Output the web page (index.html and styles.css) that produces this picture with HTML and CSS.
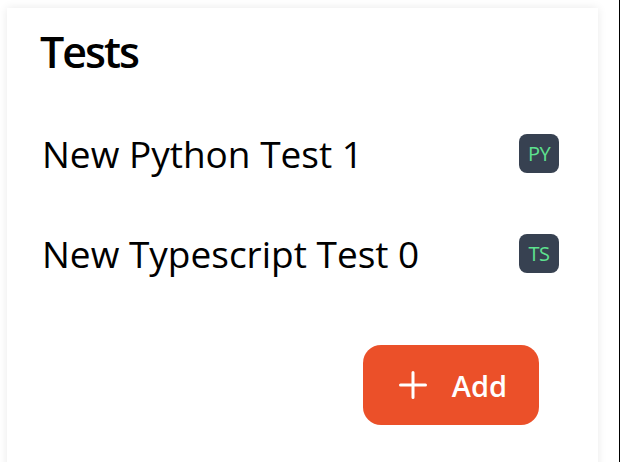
FILE: index.html
```html
<!DOCTYPE html>
<html>
<head>
<meta charset="utf-8">
<link rel="stylesheet" href="styles.css">
</head>
<body>
<div class="page">
  <section class="card">
    <h2 class="title">Tests</h2>
    <ul class="tests">
      <li class="test-row">
        <span class="test-name">New Python Test 1</span>
        <span class="badge">PY</span>
      </li>
      <li class="test-row">
        <span class="test-name">New Typescript Test 0</span>
        <span class="badge">TS</span>
      </li>
    </ul>
    <div class="actions">
      <button class="add-btn" type="button">
        <svg class="plus" width="28" height="28" viewBox="0 0 28 28" aria-hidden="true">
          <path d="M14 1.5V26.5M1.5 14H26.5" stroke="#fff" stroke-width="3" stroke-linecap="round" fill="none"/>
        </svg>
        <span>Add</span>
      </button>
    </div>
  </section>
</div>
</body>
</html>
```

FILE: styles.css
```css
html, body {
  margin: 0;
  padding: 0;
  background: #ffffff;
}

body {
  width: 620px;
  height: 462px;
  overflow: hidden;
  font-family: "Open Sans", "Noto Sans", sans-serif;
  color: #000;
}

.page {
  width: 619px;
  height: 462px;
  border-right: 1px solid #000;
  display: flex;
  align-items: flex-start;
}

.card {
  margin: 8px 0 0 7px;
  width: 591px;
  height: 470px;
  box-sizing: border-box;
  padding: 14px 39px 0 33px;
  background: #fff;
  box-shadow: 0 0 9px rgba(0, 0, 0, 0.09);
}

.title {
  margin: 0;
  font-size: 43px;
  font-weight: 600;
  line-height: 60px;
  letter-spacing: -2px;
}

.tests {
  list-style: none;
  margin: 0;
  padding: 0;
}

.test-row {
  display: flex;
  align-items: center;
  justify-content: space-between;
  height: 100px;
}

.tests .test-row:first-child {
  margin-top: 21px;
}

.test-name {
  font-size: 37px;
  padding-left: 2px;
}

.badge {
  width: 40px;
  height: 39px;
  border-radius: 8px;
  background: #374151;
  color: #5ee28f;
  font-size: 20px;
  display: flex;
  align-items: center;
  justify-content: center;
  letter-spacing: -0.5px;
}

.actions {
  display: flex;
  justify-content: flex-end;
  padding-right: 20px;
  margin-top: 42px;
}

.add-btn {
  display: flex;
  align-items: center;
  gap: 25px;
  height: 80px;
  padding: 0 32px 0 36px;
  border: none;
  border-radius: 18px;
  background: #eb5029;
  color: #fff;
  font-family: "Open Sans", "Noto Sans", sans-serif;
  font-size: 29px;
  font-weight: 600;
}

.plus {
  display: block;
}
```
